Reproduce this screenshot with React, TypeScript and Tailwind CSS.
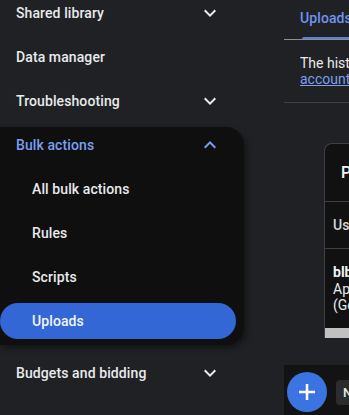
import React from "react";

function Chevron({ up = false, color = "#e8eaed" }: { up?: boolean; color?: string }) {
  return (
    <svg width="24" height="24" viewBox="0 0 24 24" className={up ? "rotate-180" : ""}>
      <path d="M16.59 8.59L12 13.17 7.41 8.59 6 10l6 6 6-6z" fill={color} />
    </svg>
  );
}

function Row({ label, chevron = false, className = "" }: { label: string; chevron?: boolean; className?: string }) {
  return (
    <div className={`h-11 w-[244px] flex items-center justify-between pl-4 pr-[22px] ${className}`}>
      <span className="text-[14px] font-medium text-[#e8eaed] tracking-[0.1px]">{label}</span>
      {chevron && <Chevron />}
    </div>
  );
}

function SubItem({ label }: { label: string }) {
  return (
    <div className="h-11 flex items-center pl-8">
      <span className="text-[14px] font-medium text-[#e8eaed] tracking-[0.1px]">{label}</span>
    </div>
  );
}

export default function App() {
  return (
    <div className="w-[349px] h-[415px] bg-[#202124] overflow-hidden flex font-['Roboto',sans-serif]">
      <div className="w-[284px] shrink-0 flex flex-col mt-[-9px]">
        <Row label="Shared library" chevron />
        <Row label="Data manager" />
        <Row label="Troubleshooting" chevron />
        <div className="mt-1 w-[244px] bg-[#0f0f0f] rounded-r-[18px] pb-[2px] shadow-[2px_3px_6px_rgba(0,0,0,0.45)]">
          <div className="h-9 flex items-center justify-between pl-4 pr-[22px]">
            <span className="text-[14px] font-medium text-[#7b9ef2] tracking-[0.1px]">Bulk actions</span>
            <Chevron up color="#7b9ef2" />
          </div>
          <div className="mt-1">
            <SubItem label="All bulk actions" />
            <SubItem label="Rules" />
            <SubItem label="Scripts" />
            <div className="h-11 py-1">
              <div className="h-9 w-[236px] rounded-full bg-[#3367d6] flex items-center pl-8">
                <span className="text-[14px] font-medium text-[#f1f3f4] tracking-[0.1px]">Uploads</span>
              </div>
            </div>
          </div>
        </div>
        <Row label="Budgets and bidding" chevron className="mt-[6px]" />
      </div>

      <div className="flex-1 min-w-0 overflow-hidden">
        <div className="w-[600px] flex flex-col">
          <div className="h-10 relative flex flex-col">
            <div className="h-[37px] flex items-center pl-4">
              <span className="text-[14px] font-medium text-[#6f93ee] tracking-[0.1px]">Uploads</span>
            </div>
            <div className="h-[3px] ml-[18px] w-[90px] bg-[#5a7fdc] rounded-t-[2px]" />
            <div className="h-px bg-[#8d8f93] mt-[-1px]" />
          </div>
          <div className="pt-[15px] pb-[15px] pl-4 text-[14px] leading-4 text-[#e8eaed] whitespace-nowrap">
            <div>The history of uploads for this</div>
            <div>
              <a className="text-[#7b9ef2] underline">account</a> is shown below.
            </div>
          </div>
          <div className="h-px bg-[#3c4043]" />
          <div className="mt-10 ml-10 w-[400px] bg-[#111111] border border-[#3c4043] border-b-0 rounded-tl-[8px] flex flex-col">
            <div className="h-[57px] flex items-center pl-4">
              <span className="text-[16px] font-medium text-[#f1f3f4]">Previous uploads</span>
            </div>
            <div className="h-px bg-[#3c4043]" />
            <div className="h-[46px] flex items-center pl-2">
              <span className="text-[14px] font-medium text-[#d5d7da]">User</span>
            </div>
            <div className="h-px bg-[#3c4043]" />
            <div className="h-[79px] pl-2 pt-[15px] text-[14px] leading-[16.5px] text-[#e8eaed]">
              <div className="font-bold text-[#f1f3f4]">blb_upload.csv</div>
              <div>Applied</div>
              <div>(Google Ads Editor)</div>
            </div>
            <div className="h-[10px] bg-[#c1c1c1]" />
          </div>
          <div className="mt-[27px] h-[50px] bg-[#131313] flex items-start pl-[3px] pt-[7px] gap-[9px]">
            <div className="w-10 h-10 rounded-full bg-[#3b74e0] flex items-center justify-center">
              <svg width="20" height="20" viewBox="0 0 20 20">
                <path d="M10 2v16M2 10h16" stroke="#ffffff" strokeWidth="2.5" />
              </svg>
            </div>
            <div className="mt-[8px] h-[25px] rounded-[4px] bg-[#2b2c2e] flex items-center pl-[7px] pr-3">
              <span className="text-[13px] font-medium text-[#e8eaed]">New upload</span>
            </div>
          </div>
        </div>
      </div>
    </div>
  );
}
